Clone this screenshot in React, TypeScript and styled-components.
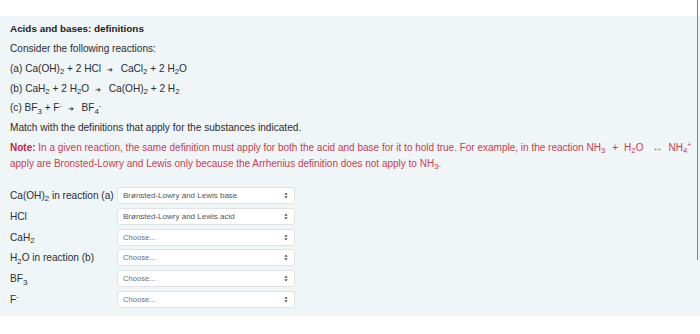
import React from 'react';
import styled, { createGlobalStyle } from 'styled-components';

const GlobalStyle = createGlobalStyle`
  body {
    margin: 0;
    background: #ffffff;
    font-family: "Liberation Sans", Arial, sans-serif;
    color: #1d2125;
    overflow: hidden;
  }
`;

const Page = styled.div`
  padding-top: 16px;
  width: 700px;
  height: 334px;
  box-sizing: border-box;
`;

const Panel = styled.section`
  background: #f0f5f7;
  padding: 3px 10px 8px;
  overflow: hidden;

  sub {
    font-size: 0.78em;
    line-height: 1;
    vertical-align: baseline;
    position: relative;
    top: 0.3em;
  }
  sup {
    font-size: 0.7em;
    line-height: 1;
    vertical-align: baseline;
    position: relative;
    top: -0.55em;
  }
`;

const Title = styled.h4`
  margin: 0;
  height: 20px;
  font-size: 9.9px;
  font-weight: 700;
  line-height: 20px;
`;

const Line = styled.p`
  margin: 0;
  height: 19.8px;
  font-size: 10.1px;
  line-height: 19.8px;
  color: #2a2e33;
`;

const Arrow = styled.span`
  font-size: 7px;
  line-height: 1;
  margin: 0 5px 0 3px;
`;

const Note = styled.div`
  margin-top: 2px;
  color: #c7404f;
  font-size: 10px;
  line-height: 16px;
  white-space: nowrap;

  b {
    color: #c2283c;
  }
`;

const NoteLine = styled.div`
  height: 16px;
`;

const Gap = styled.span<{ $w: number }>`
  display: inline-block;
  width: ${(p) => p.$w}px;
`;

const Form = styled.div`
  margin-top: 15px;
  display: grid;
  grid-template-columns: 107px 178px;
  grid-auto-rows: 17px;
  row-gap: 3.8px;
  align-items: center;
`;

const Label = styled.div`
  font-size: 10.1px;
  line-height: 17px;
  color: #2a2e33;
`;

const Select = styled.div<{ $empty?: boolean }>`
  height: 17px;
  box-sizing: border-box;
  border: 1px solid #dfe3e6;
  border-radius: 3px;
  background: #ffffff;
  display: flex;
  align-items: center;
  justify-content: space-between;
  padding: 0 6px 0 5px;
  font-size: ${(p) => (p.$empty ? '7.6px' : '8px')};
  color: ${(p) => (p.$empty ? '#6a7075' : '#50565b')};
`;

const Caret = styled.svg`
  width: 4px;
  height: 7px;
`;

const ScrollLine = styled.div`
  position: fixed;
  top: 0;
  right: 2px;
  width: 1.5px;
  height: 260px;
  background: #7d8285;
`;

const Updown = () => (
  <Caret viewBox="0 0 4 7">
    <path d="M0.3 2.8 L2 0.6 L3.7 2.8 Z M0.3 4.2 L2 6.4 L3.7 4.2 Z" fill="#55595c" />
  </Caret>
);

const rows: { label: React.ReactNode; value: string }[] = [
  { label: <>Ca(OH)<sub>2</sub> in reaction (a)</>, value: 'Brønsted-Lowry and Lewis base' },
  { label: 'HCl', value: 'Brønsted-Lowry and Lewis acid' },
  { label: <>CaH<sub>2</sub></>, value: '' },
  { label: <>H<sub>2</sub>O in reaction (b)</>, value: '' },
  { label: <>BF<sub>3</sub></>, value: '' },
  { label: <>F<sup>-</sup></>, value: '' },
];

const App: React.FC = () => {
  return (
    <Page>
      <GlobalStyle />
      <Panel>
        <Title>Acids and bases: definitions</Title>
        <Line>Consider the following reactions:</Line>
        <Line>
          (a) Ca(OH)<sub>2</sub> + 2 HCl <Arrow>➔</Arrow> CaCl<sub>2</sub> + 2 H<sub>2</sub>O
        </Line>
        <Line>
          (b) CaH<sub>2</sub> + 2 H<sub>2</sub>O <Arrow>➔</Arrow> Ca(OH)<sub>2</sub> + 2 H<sub>2</sub>
        </Line>
        <Line>
          (c) BF<sub>3</sub> + F<sup>-</sup> <Arrow>➔</Arrow> BF<sub>4</sub><sup>-</sup>
        </Line>
        <Line>Match with the definitions that apply for the substances indicated.</Line>
        <Note>
          <NoteLine>
            <b>Note:</b> In a given reaction, the same definition must apply for both the acid and base for it to hold
            true. For example, in the reaction NH<sub>3</sub>
            <Gap $w={7} />+<Gap $w={6} />H<sub>2</sub>O<Gap $w={9} />↔<Gap $w={6} />NH<sub>4</sub>
            <sup>+</sup>
          </NoteLine>
          <NoteLine>
            apply are Bronsted-Lowry and Lewis only because the Arrhenius definition does not apply to NH<sub>3</sub>.
          </NoteLine>
        </Note>
        <Form>
          {rows.map((r, i) => (
            <React.Fragment key={i}>
              <Label>{r.label}</Label>
              <Select $empty={!r.value}>
                <span>{r.value || 'Choose...'}</span>
                <Updown />
              </Select>
            </React.Fragment>
          ))}
        </Form>
      </Panel>
      <ScrollLine />
    </Page>
  );
};

export default App;
